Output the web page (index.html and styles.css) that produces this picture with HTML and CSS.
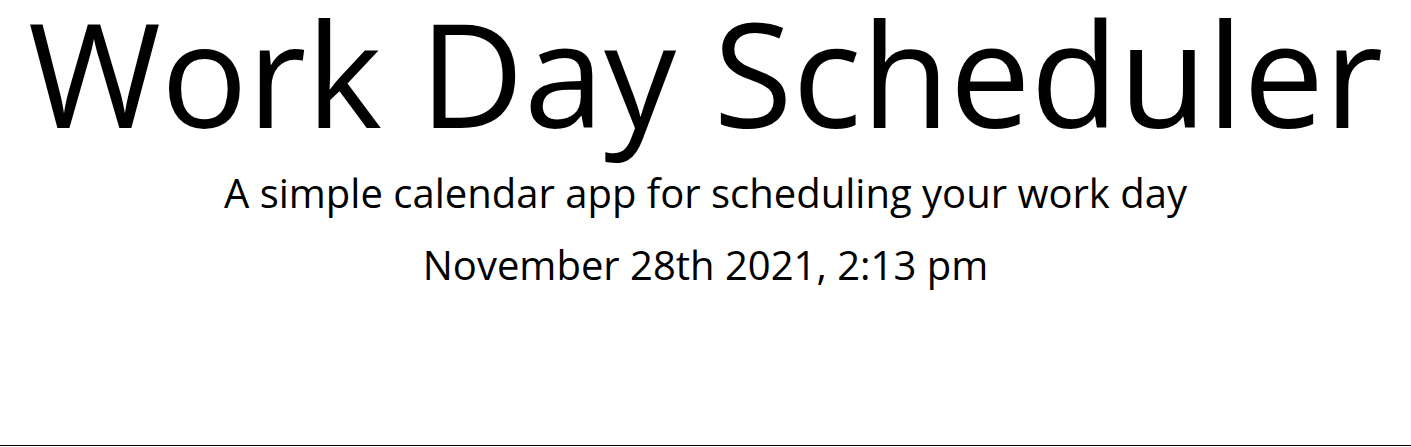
FILE: index.html
```html
<!DOCTYPE html>
<html lang="en">
<head>
<meta charset="UTF-8">
<title>Work Day Scheduler</title>
<link rel="stylesheet" href="styles.css">
</head>
<body>
<header class="jumbotron">
  <h1 class="title">Work Day Scheduler</h1>
  <p class="lead">A simple calendar app for scheduling your work day</p>
  <p class="current-day">November 28th 2021, 2:13 pm</p>
</header>
</body>
</html>
```
FILE: styles.css
```css
html, body {
  margin: 0;
  padding: 0;
  background: #fff;
}
body {
  font-family: "Open Sans", "Liberation Sans", sans-serif;
  color: #000;
}
.jumbotron {
  text-align: center;
  height: 446px;
  box-sizing: border-box;
  border-bottom: 1px solid #000;
  display: flex;
  flex-direction: column;
  align-items: center;
}
.title {
  margin: 0;
  font-size: 144px;
  font-weight: 400;
  line-height: 1;
  padding-top: 0;
}
.lead {
  margin: 0;
  font-size: 40px;
  line-height: 1.2;
  padding-top: 25px;
}
.current-day {
  margin: 0;
  font-size: 40px;
  line-height: 1.2;
  padding-top: 24px;
}
```
